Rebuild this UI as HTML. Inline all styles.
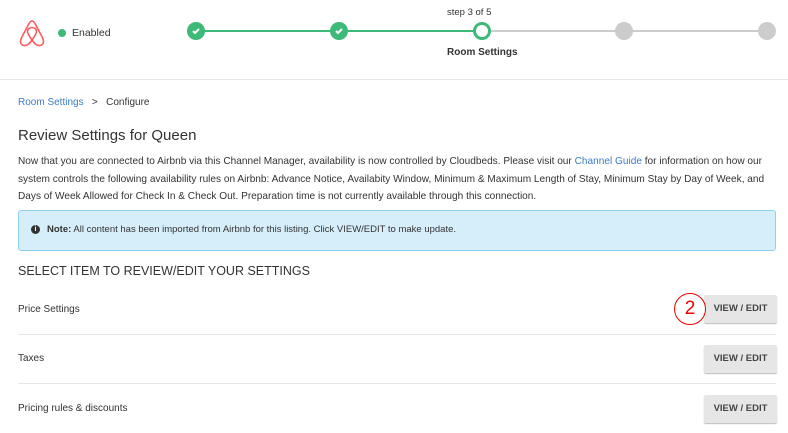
<!DOCTYPE html>
<html><head><style>
body{margin:0;width:788px;height:433px;overflow:hidden;background:#fff;font-family:"Liberation Sans",sans-serif;color:#333;position:relative}
.a{position:absolute;white-space:nowrap}
.c{position:absolute;width:18px;height:18px;border-radius:50%;top:22px}
.btn{position:absolute;left:704px;width:73px;height:28px;background:#e6e6e6;border-radius:2px;box-shadow:0 1px 1px #bbb;font-size:9.5px;font-weight:bold;color:#444;text-align:center;line-height:28px}
.hr{position:absolute;left:18px;width:758px;height:1px;background:#e6e6e6}
.p{font-size:10px;color:#333}
</style></head><body>
<svg class="a" style="left:18px;top:20px" width="28" height="30" viewBox="0 0 28 30"><path d="M14 20c-3-4-4.5-6.5-4.5-8.5 0-2.5 2-4 4.5-4s4.5 1.5 4.5 4c0 2-1.5 4.5-4.5 8.5zM14 20c-2 3-4 5.5-7.5 5.5-2.5 0-4-1.7-4-4 0-1.5.5-2.5 1.5-4.7L11 3.5C12 1.8 13 1 14 1s2 .8 3 2.5l7 13.3c1 2.2 1.5 3.2 1.5 4.7 0 2.3-1.5 4-4 4-3.5 0-5.5-2.5-7.5-5.5z" fill="none" stroke="#ff5a5f" stroke-width="1.6"/></svg>
<div class="a" style="left:58px;top:29px;width:8px;height:8px;border-radius:50%;background:#3dba78"></div>
<div class="a" style="left:72px;top:27px;font-size:10.5px;color:#333">Enabled</div>
<div class="a" style="left:196px;top:30px;width:286px;height:2px;background:#3dba78"></div>
<div class="a" style="left:482px;top:30px;width:285px;height:2px;background:#ccc"></div>
<div class="c" style="left:187px;background:#3dba78"></div>
<div class="c" style="left:330px;background:#3dba78"></div>
<svg class="a" style="left:191px;top:26px" width="10" height="10" viewBox="0 0 10 10"><path d="M2 5l2 2 4-4" stroke="#fff" stroke-width="2" fill="none"/></svg>
<svg class="a" style="left:334px;top:26px" width="10" height="10" viewBox="0 0 10 10"><path d="M2 5l2 2 4-4" stroke="#fff" stroke-width="2" fill="none"/></svg>
<div class="c" style="left:473px;background:#fff;border:3px solid #3dba78;width:12px;height:12px"></div>
<div class="c" style="left:615px;background:#ccc"></div>
<div class="c" style="left:758px;background:#ccc"></div>
<div class="a" style="left:447px;top:7px;font-size:9.5px;color:#333">step 3 of 5</div>
<div class="a" style="left:447px;top:47px;font-size:10px;font-weight:bold;color:#333">Room Settings</div>
<div class="a" style="left:0;top:79px;width:788px;height:1px;background:#e8e8e8"></div>
<div class="a" style="left:18px;top:97px;font-size:10px"><span style="color:#3a7bc8">Room Settings</span>&nbsp;&nbsp; &gt; &nbsp;&nbsp;Configure</div>
<div class="a" style="left:18px;top:127px;font-size:15px;color:#333">Review Settings for Queen</div>
<div class="a p" style="left:18px;top:153px;line-height:17.5px;font-size:10.1px">Now that you are connected to Airbnb via this Channel Manager, availability is now controlled by Cloudbeds. Please visit our <span style="color:#3a7bc8">Channel Guide</span> for information on how our<br>system controls the following availability rules on Airbnb: Advance Notice, Availabity Window, Minimum &amp; Maximum Length of Stay, Minimum Stay by Day of Week, and<br>Days of Week Allowed for Check In &amp; Check Out. Preparation time is not currently available through this connection.</div>
<div class="a" style="left:18px;top:210px;width:756px;height:39px;background:#d5eefa;border:1px solid #8fd0ec;border-radius:3px"></div>
<div class="a" style="left:31px;top:225px;width:9px;height:9px;border-radius:50%;background:#333;color:#fff;font-size:7px;font-weight:bold;text-align:center;line-height:9px">i</div>
<div class="a p" style="left:47px;top:224px;font-size:9.5px"><b>Note:</b> All content has been imported from Airbnb for this listing. Click VIEW/EDIT to make update.</div>
<div class="a" style="left:18px;top:264px;font-size:12.5px;color:#333">SELECT ITEM TO REVIEW/EDIT YOUR SETTINGS</div>
<div class="a p" style="left:18px;top:304px">Price Settings</div>
<div class="btn" style="top:295px">VIEW / EDIT</div>
<div class="hr" style="top:334px"></div>
<div class="a p" style="left:18px;top:353px">Taxes</div>
<div class="btn" style="top:345px">VIEW / EDIT</div>
<div class="hr" style="top:383px"></div>
<div class="a p" style="left:18px;top:403px">Pricing rules &amp; discounts</div>
<div class="btn" style="top:395px">VIEW / EDIT</div>
<div class="a" style="left:674px;top:293px;width:30px;height:30px;border:1.5px solid #e00;border-radius:50%;background:#fff;color:#e00;font-size:19px;text-align:center;line-height:30px">2</div>
</body></html>
